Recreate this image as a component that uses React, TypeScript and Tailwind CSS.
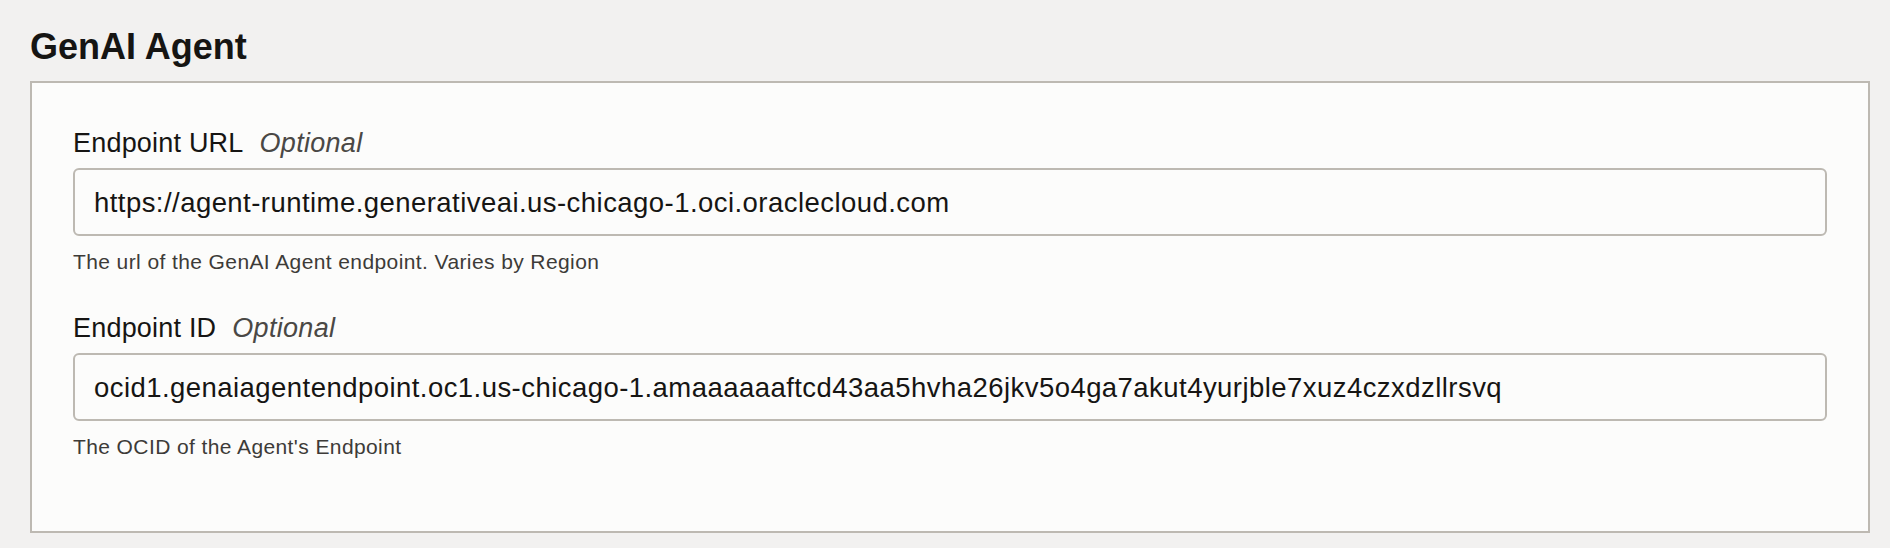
export default function App() {
  const fields = [
    {
      label: "Endpoint URL",
      value: "https://agent-runtime.generativeai.us-chicago-1.oci.oraclecloud.com",
      help: "The url of the GenAI Agent endpoint. Varies by Region",
    },
    {
      label: "Endpoint ID",
      value:
        "ocid1.genaiagentendpoint.oc1.us-chicago-1.amaaaaaaftcd43aa5hvha26jkv5o4ga7akut4yurjble7xuz4czxdzllrsvq",
      help: "The OCID of the Agent's Endpoint",
    },
  ];

  return (
    <div
      className="min-h-[548px] w-full bg-[#f2f1f0] pl-[30px] pr-[20px] pt-[26px] text-[#161513]"
      style={{ fontFamily: '"Liberation Sans", Arial, sans-serif' }}
    >
      <h2 className="text-[36px] font-bold leading-[42px] mb-[13px]">GenAI Agent</h2>
      <div className="border-2 border-[#bdb9b2] bg-[#fcfcfb] pl-[41px] pr-[41px] pt-[44px] pb-[71px]">
        {fields.map((f, i) => (
          <div key={f.label} className={i > 0 ? "mt-[37px]" : ""}>
            <label className="block text-[27px] leading-[32px] tracking-[0.2px]">
              {f.label}
              <span className="ml-[16px] italic tracking-[0.3px] text-[#4a4845]">Optional</span>
            </label>
            <div className="mt-[9px] h-[68px] flex items-center rounded-[6px] border-2 border-[#bdb9b2] bg-[#fcfcfb] px-[19px] pt-[2px] text-[27.5px] tracking-[0.45px]">
              {f.value}
            </div>
            <p className="mt-[13px] text-[21px] leading-[26px] tracking-[0.4px] text-[#3d3b38]">{f.help}</p>
          </div>
        ))}
      </div>
    </div>
  );
}
